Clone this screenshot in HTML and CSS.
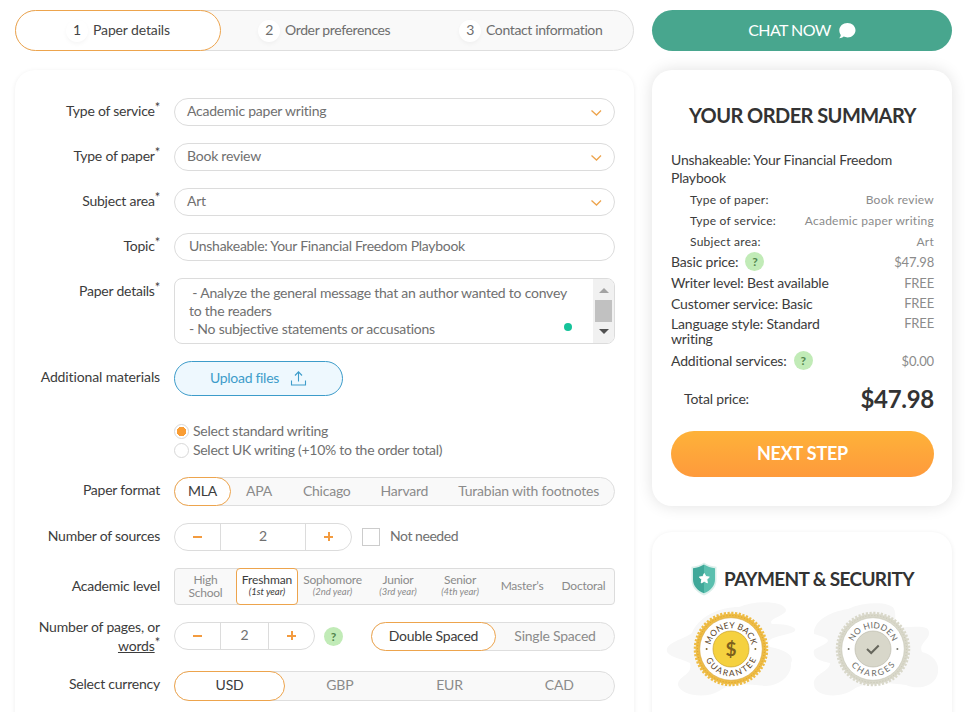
FILE: index.html
```html
<!DOCTYPE html>
<html lang="en">
<head>
	<meta charset="utf-8">
	<title>Order form</title>
	<link rel="stylesheet" href="styles.css">
</head>
<body>
<div class="page">

	<main class="content">
		<div class="steps">
			<div class="step active"><span class="num">1</span><span class="name">Paper details</span></div>
			<div class="step step2"><span class="num">2</span><span class="name">Order preferences</span></div>
			<div class="step step3"><span class="num">3</span><span class="name">Contact information</span></div>
		</div>

		<form class="panel">
			<div class="row">
				<label>Type of service<sup>*</sup></label>
				<div class="field select"><span>Academic paper writing</span><svg width="12" height="8" viewBox="0 0 12 8"><path d="M1.500 1.500 6.500 6l4.500-4.500"/></svg></div>
			</div>
			<div class="row">
				<label>Type of paper<sup>*</sup></label>
				<div class="field select"><span>Book review</span><svg width="12" height="8" viewBox="0 0 12 8"><path d="M1.500 1.500 6.500 6l4.500-4.500"/></svg></div>
			</div>
			<div class="row">
				<label>Subject area<sup>*</sup></label>
				<div class="field select"><span>Art</span><svg width="12" height="8" viewBox="0 0 12 8"><path d="M1.500 1.500 6.500 6l4.500-4.500"/></svg></div>
			</div>
			<div class="row">
				<label>Topic<sup>*</sup></label>
				<div class="field topic"><span>Unshakeable: Your Financial Freedom Playbook</span></div>
			</div>
			<div class="row">
				<label>Paper details<sup>*</sup></label>
				<div class="area">
					<div class="area-text">&nbsp;- Analyze the general message that an author wanted to convey<br>to the readers<br>- No subjective statements or accusations</div>
					<span class="dot"></span>
					<div class="scroll">
						<svg width="10" height="5" viewBox="0 0 10 5"><path fill="#a3a3a3" d="M5 0l5 5H0z"/></svg>
						<div class="thumb"></div>
						<svg width="10" height="5" viewBox="0 0 10 5"><path fill="#505050" d="M5 5L0 0h10z"/></svg>
					</div>
				</div>
			</div>
			<div class="row">
				<label class="l-upload">Additional materials</label>
				<div class="upload">
					<span>Upload files</span>
					<svg width="17" height="17" viewBox="0 0 17 17"><path d="M1.500 10.500v4.500h14v-4.500M8.500 11.500V2M5 5.500l3.500-3.700L12 5.500"/></svg>
				</div>
			</div>
			<div class="radios">
				<div class="radio"><i class="on"></i><span>Select standard writing</span></div>
				<div class="radio"><i></i><span class="uk">Select UK writing (+10% to the order total)</span></div>
			</div>
			<div class="row">
				<label>Paper format</label>
				<div class="tabs format">
					<span class="tab active">MLA</span>
					<span class="tab">APA</span>
					<span class="tab">Chicago</span>
					<span class="tab">Harvard</span>
					<span class="tab">Turabian with footnotes</span>
				</div>
			</div>
			<div class="row">
				<label>Number of sources</label>
				<div class="counter sources"><b class="minus"></b><span>2</span><b class="plus"></b></div>
				<i class="check"></i><span class="not-needed">Not needed</span>
			</div>
			<div class="row">
				<label class="l-level">Academic level</label>
				<div class="levels">
					<div class="level">High<br>School</div>
					<div class="level active">Freshman<em>(1st year)</em></div>
					<div class="level">Sophomore<em>(2nd year)</em></div>
					<div class="level">Junior<em>(3rd year)</em></div>
					<div class="level">Senior<em>(4th year)</em></div>
					<div class="level">Master’s</div>
					<div class="level">Doctoral</div>
				</div>
			</div>
			<div class="row row-pages">
				<label class="l-pages">Number of pages, or <u>words</u><sup>*</sup></label>
				<div class="counter pages"><b class="minus"></b><span>2</span><b class="plus"></b></div>
				<i class="help">?</i>
				<div class="tabs spacing">
					<span class="tab active">Double Spaced</span>
					<span class="tab">Single Spaced</span>
				</div>
			</div>
			<div class="row">
				<label>Select currency</label>
				<div class="tabs currency">
					<span class="tab active">USD</span>
					<span class="tab">GBP</span>
					<span class="tab">EUR</span>
					<span class="tab">CAD</span>
				</div>
			</div>
		</form>
	</main>

	<aside class="side">
		<div class="chat">
			<span>CHAT NOW</span>
			<svg width="17" height="16" viewBox="0 0 17 16"><path fill="#fff" d="M8.500 0C13 0 16.500 3.200 16.500 7.200S13 14.400 8.500 14.400c-1.400 0-2.700-.3-3.800-.8C3.500 14.700 2 15.300.2 15.300c.9-1 1.500-2.100 1.600-3.300C.8 10.700.3 9 .3 7.200.3 3.200 4 0 8.500 0z"/></svg>
		</div>

		<section class="card summary">
			<h2>YOUR ORDER SUMMARY</h2>
			<div class="topic-name">Unshakeable: Your Financial Freedom Playbook</div>
			<div class="line small"><span>Type of paper:</span><span class="val">Book review</span></div>
			<div class="line small"><span>Type of service:</span><span class="val">Academic paper writing</span></div>
			<div class="line small"><span>Subject area:</span><span class="val">Art</span></div>
			<div class="line basic"><span>Basic price:</span><i class="help">?</i><span class="val">$47.98</span></div>
			<div class="line writer"><span>Writer level: Best available</span><span class="val">FREE</span></div>
			<div class="line customer"><span>Customer service: Basic</span><span class="val">FREE</span></div>
			<div class="line lang"><span>Language style: Standard<br>writing</span><span class="val">FREE</span></div>
			<div class="line extra"><span>Additional services:</span><i class="help">?</i><span class="val">$0.00</span></div>
			<div class="line total"><span>Total price:</span><strong>$47.98</strong></div>
			<div class="next">NEXT STEP</div>
		</section>

		<section class="card payment">
			<div class="pay-title">
				<svg width="26" height="34" viewBox="0 0 26 34">
					<path fill="#dcefeb" d="M13 .5c3.500 2.500 8 4 12.500 4.300V18c0 7-5 12.500-12.500 15.500C5.500 30.500.5 25 .5 18V4.800C5 4.500 9.500 3 13 .5z"/>
					<path fill="#3fa899" d="M13 2.500v28.800C6.500 28.500 2 24 2 17.500V6.200C6 5.800 10 4.500 13 2.500z"/>
					<path fill="#5abfae" d="M13 2.500v28.800c6.500-2.800 11-7.300 11-13.800V6.200C20 5.800 16 4.500 13 2.500z"/>
					<path fill="#fff" stroke="#fff" stroke-linejoin="round" d="M13.300 11.500l1.500 3.100 3.500.5-2.500 2.400.6 3.400-3.100-1.600-3.100 1.600.6-3.400-2.500-2.400 3.500-.5z"/>
				</svg>
				<h2>PAYMENT &amp; SECURITY</h2>
			</div>
			<div class="seals">
				<svg width="130" height="96" viewBox="-65 -48 130 96">
					<defs>
						<path id="arcTop" d="M-20.800 0A20.800 20.800 0 0 1 20.800 0"/>
						<path id="arcBottom" d="M-27.200 0A27.200 27.200 0 0 0 27.200 0"/>
					</defs>
					<path class="blob" d="M-64 3C-66-7-48-9-39-16-33-32-12-42 8-42 24-49 50-48 54-41 60-34 35-31 41-25 57-26 72-20 60-16 46-12 33-11 39-2 55 1 64 7 60 14 61 24 52 36 35 37 12 35 1 34-12 42-25 50-50 47-53 36-53 26-38 27-41 14-48 10-60 9-64 3z"/>
					<circle r="35.500" fill="#eebc45"/>
					<circle class="teeth" r="36" stroke="#eebc45"/>
					<circle class="grain" r="33.500" stroke="#d9a02d"/>
					<circle r="31.300" fill="#fff" stroke="#d6a640" stroke-width=".6"/>
					<circle r="18" fill="#f5d13f" stroke="#c9a22f" stroke-width=".7"/>
					<circle r="1" cx="-24.400" fill="#8a6b2c"/><circle r="1" cx="24.400" fill="#8a6b2c"/>
					<text class="seal-text" fill="#5b4426"><textPath href="#arcTop" startOffset="50%" textLength="57">MONEY BACK</textPath></text>
					<text class="seal-text" fill="#5b4426"><textPath href="#arcBottom" startOffset="50%" textLength="64">GUARANTEE</textPath></text>
					<text class="dollar" y="6.500">$</text>
				</svg>
				<svg width="130" height="96" viewBox="-65 -48 130 96">
					<path class="blob" d="M-59-15C-60-27-45-37-25-40-7-48 18-47 21-40 24-34 20-27 25-22 40-21 55-25 56-17 57-9 45-6 49 3 62 6 68 17 64 27 60 38 44 41 33 36 11 33-10 34-19 40-32 50-58 48-59 36-61 25-43 23-43 14-53 12-61 10-59 1-52-4-42-6-46-10-51-13-56-14-59-15z"/>
					<circle r="35.500" fill="#d9d8ca"/>
					<circle class="teeth" r="36" stroke="#d9d8ca"/>
					<circle class="grain" r="33.500" stroke="#c9c8b7"/>
					<circle r="31.300" fill="#fff" stroke="#c5c4b4" stroke-width=".6"/>
					<circle r="18" fill="#d8d7ca" stroke="#bdbcad" stroke-width=".7"/>
					<circle r="1" cx="-24.400" fill="#77766c"/><circle r="1" cx="24.400" fill="#77766c"/>
					<text class="seal-text" fill="#6b6b66"><textPath href="#arcTop" startOffset="50%" textLength="50">NO HIDDEN</textPath></text>
					<text class="seal-text" fill="#6b6b66"><textPath href="#arcBottom" startOffset="50%" textLength="51">CHARGES</textPath></text>
					<path d="M-6 0l4.200 4 7.500-7.500" fill="none" stroke="#66665c" stroke-width="2"/>
				</svg>
			</div>
		</section>
	</aside>

</div>
</body>
</html>
```
FILE: styles.css
```css
* { box-sizing: border-box; }
body { margin: 0; background: #fff; font-family: Lato, "Open Sans", sans-serif; font-size: 14px; letter-spacing: -.23px; color: #3c3c3c; }
i { font-style: normal; }
h2 { margin: 0; font-weight: bold; color: #333; }

.page { display: flex; gap: 18px; height: 712px; padding: 10px 13px 0 15px; overflow: hidden; }
.content { width: 619px; }
.side { width: 300px; }

/* steps */
.steps { display: flex; height: 41px; border: 1px solid #dedede; border-radius: 21px; background: #f9f9f9; color: #6e6e6e; letter-spacing: -.37px; }
.step { display: flex; align-items: center; gap: 5px; }
.step.active { width: 206px; margin: -1px 0 -1px -1px; padding-left: 50px; border: 1px solid #eda44d; border-radius: 21px; background: #fff; color: #444; letter-spacing: -.13px; }
.step2 { width: 201px; padding-left: 37px; }
.step3 { padding-left: 37px; }
.step .name { padding-bottom: 2px; }
.num { width: 22px; height: 22px; border-radius: 50%; background: #fff; box-shadow: 0 2px 4px rgba(0,0,0,.04); line-height: 19px; text-align: center; }

/* form panel */
.panel { height: 680px; margin-top: 19px; padding: 28px 19px 0 12px; border-radius: 20px; background: #fff; box-shadow: 0 1px 5px rgba(0,0,0,.07); }
.row { display: flex; align-items: flex-start; margin-bottom: 17px; }
label { width: 133px; margin-right: 14px; line-height: 25px; text-align: right; white-space: nowrap; }
sup { font-size: 13px; line-height: 0; vertical-align: 4px; }
.l-upload { line-height: 31px; letter-spacing: -.13px; }
.l-level { line-height: 35px; }
.l-pages { line-height: 19px; margin-top: -5px; white-space: normal; letter-spacing: -.18px; }
.row-pages { height: 32px; }

.field { display: flex; align-items: center; justify-content: space-between; width: 441px; height: 28px; padding: 0 12px; border: 1px solid #dcdcdc; border-radius: 14px; color: #707070; line-height: 24px; }
.field span { padding-bottom: 2px; }
.field svg { margin-top: 2px; fill: none; stroke: #eda44d; stroke-width: 1.3; }
.topic { padding: 0 14px; letter-spacing: -.28px; }

.area { position: relative; display: flex; justify-content: space-between; width: 441px; height: 66px; border: 1px solid #dcdcdc; border-radius: 8px; overflow: hidden; color: #707070; }
.area-text { padding: 5px 0 0 14px; line-height: 18px; white-space: nowrap; }
.dot { position: absolute; right: 42px; bottom: 12px; width: 8px; height: 8px; border-radius: 50%; background: #15c39a; }
.scroll { display: flex; flex-direction: column; align-items: center; width: 21px; padding-top: 9px; background: #f1f1f1; }
.thumb { width: 17px; height: 22px; margin: 7px 0; background: #c1c1c1; }

.upload { display: flex; align-items: center; width: 169px; height: 35px; padding-left: 35px; border: 1px solid #3d9cca; border-radius: 18px; background: #eef8fe; color: #3d9cca; }
.upload span { margin-right: 11px; padding-bottom: 2px; line-height: 31px; letter-spacing: -.3px; }
.upload svg { fill: none; stroke: #3d9cca; stroke-width: 1.1; }

.radios { margin: 26px 0 17px 147px; color: #707070; }
.radio { display: flex; align-items: center; gap: 4px; height: 19px; }
.radio span { padding-bottom: 2px; }
.radio .uk { letter-spacing: -.29px; }
.radio i { width: 15px; height: 15px; border: 1px solid #d8d8d8; border-radius: 50%; }
.radio i.on { background: radial-gradient(circle, #f99d35 4.500px, #fff 5px); }

.tabs { display: flex; height: 29px; border: 1px solid #dedede; border-radius: 15px; background: #f9f9f9; color: #8b8b8b; line-height: 26px; text-align: center; white-space: nowrap; }
.tabs .active { margin: -1px 0 -1px -1px; border: 1px solid #eda44d; border-radius: 15px; background: #fff; color: #3c3c3c; }
.format { width: 441px; }
.format .tab { padding: 0 15px; }
.format .tab:nth-child(3) { padding-left: 16px; }
.format .active { width: 58px; padding: 0; }
.spacing { width: 244px; margin-left: 28px; }
.spacing .active { width: 125px; }
.spacing .tab:last-child { flex: 1; }
.currency { width: 441px; height: 30px; }
.currency .tab { flex: 1; }
.currency .active { flex: none; width: 111px; }

.counter { display: flex; height: 28px; border: 1px solid #dcdcdc; border-radius: 14px; color: #707070; }
.counter b { position: relative; flex: 1; }
.counter span { border: 1px solid #dcdcdc; border-width: 0 1px; text-align: center; line-height: 24px; }
.sources { width: 178px; }
.sources span { width: 86px; }
.pages { width: 141px; }
.pages span { width: 49px; }
.counter b:before, .plus:after { content: ""; position: absolute; left: 50%; top: 50%; width: 9px; height: 2px; margin: -1px 0 0 -5px; background: #f39b3f; }
.plus:after { width: 2px; height: 9px; margin: -5px 0 0 -1px; }
.check { width: 18px; height: 18px; margin: 5px 10px 0; border: 1px solid #ccc; }
.not-needed { line-height: 25px; color: #707070; letter-spacing: -.45px; }

.levels { display: grid; grid-template-columns: 61px 62px 69px 62px 62px 62px 61px; width: 441px; height: 37px; border: 1px solid #dcdcdc; border-radius: 4px; background: #f9f9f9; }
.level { display: flex; flex-direction: column; justify-content: center; padding-bottom: 2px; font-size: 12px; line-height: 13px; text-align: center; color: #8b8b8b; }
.level em { font-size: 9.500px; line-height: 12px; letter-spacing: 0; }
.level.active { margin: -1px 0; border: 1px solid #eda44d; border-radius: 4px; background: #fff; color: #3c3c3c; letter-spacing: -.1px; }

.help { width: 19px; height: 19px; border-radius: 50%; background: #c1ebb7; color: #52854d; font-size: 12px; font-weight: bold; line-height: 19px; text-align: center; }
.row-pages .help { margin: 5px 0 0 9px; }

/* right column */
.chat { display: flex; align-items: center; justify-content: center; gap: 8px; height: 41px; border-radius: 21px; background: #48a68e; color: #fff; font-size: 16px; letter-spacing: -.55px; }
.chat span { padding-bottom: 2px; }
.card { border-radius: 20px; background: #fff; }
.summary { height: 436px; margin-top: 19px; padding: 33px 18px 0 19px; box-shadow: 0 0 16px rgba(0,0,0,.12); }
.summary h2 { font-size: 20px; line-height: 25px; letter-spacing: -.56px; text-align: center; white-space: nowrap; }
.topic-name { margin: 23px 0 2px; line-height: 18px; letter-spacing: -.2px; }
.line { display: flex; align-items: center; white-space: nowrap; letter-spacing: -.17px; }
.line .val { margin-left: auto; font-size: 13px; color: #8b8b8b; }
.line.small { height: 21px; padding-left: 19px; font-size: 12px; letter-spacing: .25px; }
.small .val { font-size: 12px; }
.line .help { margin-left: 7px; }
.basic { height: 19px; }
.writer { height: 23px; }
.customer { height: 18px; }
.lang { align-items: flex-start; padding-top: 4px; line-height: 15px; }
.extra { height: 29px; }
.total { justify-content: space-between; height: 47px; padding-left: 13px; }
.total strong { font-size: 24px; font-weight: bold; letter-spacing: -.3px; color: #333; }
.next { height: 46px; margin-top: 9px; border-radius: 23px; background: linear-gradient(#feb239, #fe9a3c); color: #fff; font-size: 18px; font-weight: bold; line-height: 44px; text-align: center; }

.payment { height: 200px; margin-top: 26px; padding-top: 30px; box-shadow: 0 1px 5px rgba(0,0,0,.08); }
.pay-title { display: flex; align-items: center; margin-left: 39px; gap: 7px; }
.pay-title h2 { font-size: 19px; line-height: 30px; letter-spacing: -.65px; white-space: nowrap; }
.seals { display: flex; gap: 12px; margin: 5px 0 0 14px; }
.blob { fill: #f7f7f7; }
.teeth { fill: none; stroke-width: 2.500; stroke-dasharray: 2.200 1.570; }
.grain { fill: none; stroke-width: 1; stroke-dasharray: 1 2; }
.seal-text { font-family: Lato, sans-serif; font-size: 8.500px; letter-spacing: 0; text-anchor: middle; }
.dollar { fill: #7c5f1d; font-size: 19px; font-weight: bold; text-anchor: middle; }
```
